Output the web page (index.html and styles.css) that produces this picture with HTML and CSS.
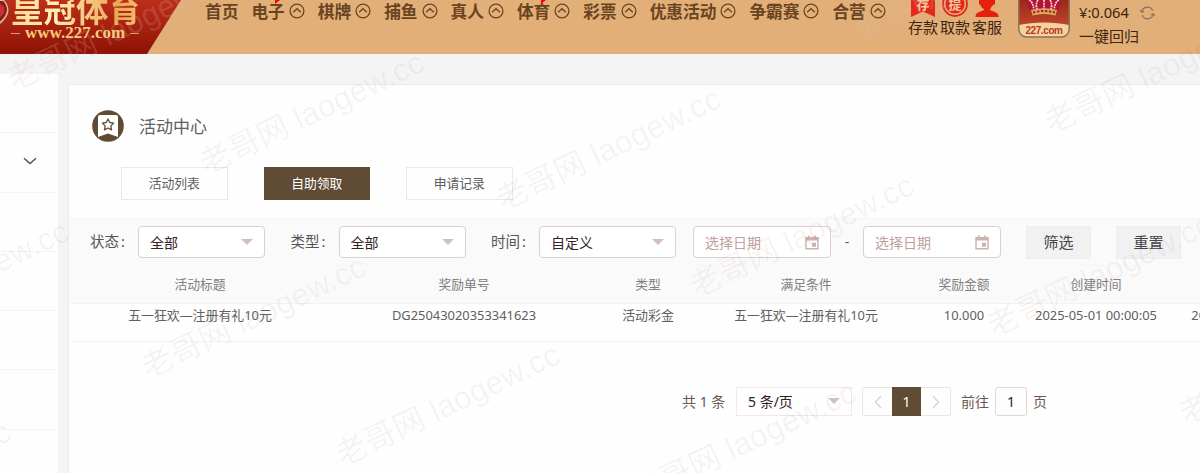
FILE: index.html
```html
<!DOCTYPE html>
<html lang="zh-CN">
<head>
    <meta charset="UTF-8">
    <meta name="viewport" content="width=device-width, initial-scale=1.0">
    <title>活动中心</title>
    <link rel="stylesheet" href="styles.css">
</head>
<body>
    <!-- shared icons -->
    <svg class="sprite" width="0" height="0">
        <symbol id="up" viewBox="0 0 16 16">
            <circle cx="8" cy="8" r="6.9" fill="none" stroke="currentColor" stroke-width="1.3"/>
            <path d="M4.2 9.2 8 5.7l3.8 3.5" fill="none" stroke="currentColor" stroke-width="1.3"/>
        </symbol>
        <symbol id="calendar" viewBox="0 0 14 15">
            <path d="M1 2.6h12v11.1H1z" fill="none" stroke="currentColor" stroke-width="1.4"/>
            <path d="M1 2h12v3.4H1zM3 .5h1.7v3H3zM9.3.5H11v3H9.3zM7 7.800h4v4H7z" fill="currentColor"/>
        </symbol>
    </svg>

    <header class="header">
        <div class="logo">
            <svg class="logo-gem" width="9" height="26" viewBox="0 0 9 26">
                <path d="M0 0h4c2 2 4 5 4.500 9.500C8.500 15 5 20 0 24z" fill="#d9b8a0"/>
                <path d="M0 1h3c2 2 3.700 4.500 4 8.500C6.800 14 4 18.500 0 21.500z" fill="#8d1a17"/>
                <path d="M0 4c3 1 4.500 3 4.500 6S3 15 0 17z" fill="#c93235"/>
            </svg>
            <div class="logo-name">皇冠体育</div>
            <div class="logo-url"><i></i>www.227.com<i></i></div>
        </div>
        <nav class="nav">
            <a class="nav-item">首页</a>
            <a class="nav-item hot">电子<svg><use href="#up"/></svg></a>
            <a class="nav-item">棋牌<svg><use href="#up"/></svg></a>
            <a class="nav-item">捕鱼<svg><use href="#up"/></svg></a>
            <a class="nav-item">真人<svg><use href="#up"/></svg></a>
            <a class="nav-item hot">体育<svg><use href="#up"/></svg></a>
            <a class="nav-item">彩票<svg><use href="#up"/></svg></a>
            <a class="nav-item">优惠活动<svg><use href="#up"/></svg></a>
            <a class="nav-item">争霸赛<svg><use href="#up"/></svg></a>
            <a class="nav-item">合营<svg><use href="#up"/></svg></a>
        </nav>
        <div class="quick">
            <a class="quick-item">
                <svg width="26" height="18" viewBox="0 0 26 18">
                    <path d="M1 0h24v17l-12-5.500L1 17z" fill="#e5281c"/>
                    <text x="13" y="9" class="quick-char">存</text>
                </svg>
                <span>存款</span>
            </a>
            <a class="quick-item">
                <svg width="26" height="18" viewBox="0 0 26 18">
                    <circle cx="13" cy="4" r="12" fill="none" stroke="#e5281c" stroke-width="1.800"/>
                    <circle cx="13" cy="4" r="9.500" fill="#e5281c"/>
                    <text x="13" y="9" class="quick-char">提</text>
                </svg>
                <span>取款</span>
            </a>
            <a class="quick-item">
                <svg width="26" height="18" viewBox="0 0 26 18">
                    <path d="M5 0h16v4l-3 2c-1 2-2 3-2 4l6 2.500c2 1 2.500 2.500 2.500 4.500H1.500c0-2 .5-3.500 2.500-4.500L10 10c0-1-1-2-2-4L5 4z" fill="#e5200f"/>
                    <path d="M7 5c1 2.500 3 4 6 4" fill="none" stroke="#e5200f" stroke-width="1.200"/>
                </svg>
                <span>客服</span>
            </a>
        </div>
        <div class="app-logo">
            <svg width="52" height="38" viewBox="0 0 52 38">
                <defs>
                    <linearGradient id="appRed" x1="0" y1="0" x2="0" y2="1">
                        <stop offset="0" stop-color="#8f2115"/>
                        <stop offset="1" stop-color="#d0502f"/>
                    </linearGradient>
                </defs>
                <path d="M.8-8h50.400v37a8 8 0 0 1-8 8H8.800a8 8 0 0 1-8-8z" fill="url(#appRed)"/>
                <path d="M1 25c14-3.500 36-3.500 50 0v4a8 8 0 0 1-8 8H9a8 8 0 0 1-8-8z" fill="#f4d3a2"/>
                <path d="M.8-8h50.400v37a8 8 0 0 1-8 8H8.800a8 8 0 0 1-8-8z" fill="none" stroke="#8b7355" stroke-width="1.500"/>
                <path d="M9 0h34c0 4-2 7-3 10H12C11 7 9 4 9 0z" fill="#b5123a"/>
                <path d="M11 0c3 1 4 5 5 9M20 0c-2 3-2 6-1 9M26 0v9M32 0c2 3 2 6 1 9M41 0c-3 1-4 5-5 9" fill="none" stroke="#f3d7c6" stroke-width="1.700" stroke-dasharray="2 .7"/>
                <path d="M13 10q13-3.500 26 0l-1.500 5.500q-11.500-3-23 0z" fill="#dca95c"/>
                <path d="M15 12.500q11-3 22 0" fill="none" stroke="#a3203a" stroke-width="2" stroke-dasharray="2.500 1.500"/>
            </svg>
            <span class="app-url">227.com</span>
        </div>
        <div class="wallet">
            <div class="balance">¥:0.064
                <svg width="15" height="14" viewBox="0 0 15 14" fill="none" stroke="#85715c" stroke-width="1.100">
                    <path d="M1.800 5.800A5.700 5.700 0 0 1 12.700 4.700M13.200 8.200A5.700 5.700 0 0 1 2.300 9.300"/>
                    <path d="M.3 4.200 1.800 6.200 4 5M14.700 9.800 13.200 7.800 11 9"/>
                </svg>
            </div>
            <div>一键回归</div>
        </div>
    </header>

    <div class="page">
        <aside class="sidebar">
            <div class="side-item"></div>
            <div class="side-item">
                <svg width="14" height="8" viewBox="0 0 14 8"><path d="M1 1.200 7 6.500l6-5.300" fill="none" stroke="#5f4b42" stroke-width="1.400"/></svg>
            </div>
            <div class="side-item"></div>
            <div class="side-item"></div>
            <div class="side-item"></div>
            <div class="side-item"></div>
            <div class="side-item"></div>
        </aside>

        <main class="panel">
            <div class="panel-title">
                <svg width="32" height="32" viewBox="0 0 32 32">
                    <circle cx="16" cy="16" r="15.800" fill="#604b35"/>
                    <path d="M8 5h16q2 0 2 2v20l-10-3.500L6 27V7q0-2 2-2z" fill="#fff"/>
                    <path d="m16 9 1.800 3.500 3.900.6-2.800 2.800.6 3.900-3.500-1.800-3.500 1.800.6-3.900-2.800-2.800 3.900-.6z" fill="none" stroke="#604b35" stroke-width="1.300" stroke-linejoin="round"/>
                </svg>
                <span>活动中心</span>
            </div>
            <div class="tabs">
                <a class="tab">活动列表</a>
                <a class="tab active">自助领取</a>
                <a class="tab">申请记录</a>
            </div>

            <div class="filters">
                <span class="label">状态<i>:</i></span>
                <div class="select">全部<i class="caret"></i></div>
                <span class="label">类型<i>:</i></span>
                <div class="select">全部<i class="caret"></i></div>
                <span class="label">时间<i>:</i></span>
                <div class="select wide">自定义<i class="caret"></i></div>
                <div class="date">选择日期<svg><use href="#calendar"/></svg></div>
                <span class="dash">-</span>
                <div class="date">选择日期<svg><use href="#calendar"/></svg></div>
                <a class="btn">筛选</a>
                <a class="btn">重置</a>
            </div>

            <div class="table">
                <div class="row head">
                    <div>活动标题</div>
                    <div>奖励单号</div>
                    <div>类型</div>
                    <div>满足条件</div>
                    <div>奖励金额</div>
                    <div>创建时间</div>
                    <div></div>
                </div>
                <div class="row">
                    <div>五一狂欢—注册有礼10元</div>
                    <div>DG25043020353341623</div>
                    <div>活动彩金</div>
                    <div>五一狂欢—注册有礼10元</div>
                    <div>10.000</div>
                    <div>2025-05-01 00:00:05</div>
                    <div>2025-05-01</div>
                </div>
            </div>

            <div class="pagination">
                <span class="total">共 1 条</span>
                <div class="page-size">5 条/页<i class="caret"></i></div>
                <div class="pager">
                    <a><svg width="8" height="14" viewBox="0 0 8 14"><path d="M7 1 1.500 7 7 13"/></svg></a>
                    <a class="active">1</a>
                    <a><svg width="8" height="14" viewBox="0 0 8 14"><path d="M1 1l5.500 6L1 13"/></svg></a>
                </div>
                <span class="jump">前往</span>
                <div class="page-input">1</div>
                <span>页</span>
            </div>
        </main>
    </div>

    <!-- watermark -->
    <svg class="watermark" width="1200" height="473" viewBox="0 0 1200 473">
        <g class="on-dark">
            <text transform="translate(14 91) rotate(-25.500)" textLength="244">老哥网 laogew.cc</text>
            <text transform="translate(861 45) rotate(-25.500)" textLength="244">老哥网 laogew.cc</text>
        </g>
        <text transform="translate(206 175) rotate(-25.500)" textLength="244">老哥网 laogew.cc</text>
        <text transform="translate(503 211) rotate(-25.500)" textLength="244">老哥网 laogew.cc</text>
        <text transform="translate(1051 134) rotate(-25.500)" textLength="244">老哥网 laogew.cc</text>
        <text transform="translate(696 298) rotate(-25.500)" textLength="244">老哥网 laogew.cc</text>
        <text transform="translate(994 337) rotate(-25.500)" textLength="244">老哥网 laogew.cc</text>
        <text transform="translate(148 379) rotate(-25.500)" textLength="244">老哥网 laogew.cc</text>
        <text transform="translate(342 467) rotate(-25.500)" textLength="244">老哥网 laogew.cc</text>
        <text transform="translate(638 505) rotate(-25.500)" textLength="244">老哥网 laogew.cc</text>
        <text transform="translate(1186 425) rotate(-25.500)" textLength="244">老哥网 laogew.cc</text>
        <text transform="translate(-149 344) rotate(-25.500)" textLength="244">老哥网 laogew.cc</text>
        <text transform="translate(-207 544) rotate(-25.500)" textLength="244">老哥网 laogew.cc</text>
    </svg>
</body>
</html>
```
FILE: styles.css
```css
* {
    margin: 0;
    padding: 0;
    box-sizing: border-box;
}

body {
    font-family: 'Noto Sans', 'Noto Sans CJK SC', sans-serif;
    font-size: 13px;
    background: #f4f4f4;
    color: #606060;
    height: 473px;
    overflow: hidden;
    position: relative;
}

.sprite {
    position: absolute;
}

/* header */
.header {
    height: 54px;
    background: #e3af78;
    display: flex;
    color: #3d2510;
    overflow: hidden;
}

.logo {
    width: 181px;
    height: 54px;
    background: linear-gradient(#bd2f1a, #8e1205);
    clip-path: polygon(0 0, 100% 0, 147px 100%, 0 100%);
    position: relative;
    flex: none;
}

.logo-gem {
    position: absolute;
    left: 0;
    top: 0;
}

.logo-name {
    font: bold 32.5px/32px 'Noto Sans CJK SC', sans-serif;
    height: 34px;
    margin-top: -8px;
    padding-left: 11px;
    white-space: nowrap;
    background: linear-gradient(90deg, #f8d68c, #ffefb5 30%, #e9a953 65%, #ffe49c);
    background-clip: text;
    -webkit-background-clip: text;
    color: transparent;
}

.logo-url {
    display: flex;
    align-items: center;
    gap: 5px;
    padding-left: 11px;
    margin-top: -2px;
    font: bold 17px/18px 'Liberation Serif', serif;
    color: #f7cd78;
}

.logo-url i {
    width: 9px;
    height: 1px;
    background: #dfa25e;
}

.nav {
    display: flex;
    gap: 13px;
    padding-left: 24px;
    width: 727px;
    flex: none;
    font-size: 16.7px;
    font-weight: bold;
    line-height: 24px;
    color: #694421;
}

.nav-item {
    display: flex;
    gap: 4px;
    height: 24px;
    position: relative;
    white-space: nowrap;
}

.nav-item svg {
    width: 16px;
    height: 16px;
    margin-top: 3px;
}

.hot::before {
    content: '';
    position: absolute;
    left: 24px;
    top: 0;
    border-top: 4px solid #f00;
    border-right: 5px solid transparent;
}

.quick {
    display: flex;
    gap: 2px;
    width: 110px;
    flex: none;
    font-size: 15px;
    line-height: 18px;
}

.quick-item {
    width: 30px;
    display: flex;
    flex-direction: column;
    align-items: center;
    white-space: nowrap;
}

.quick-char {
    font: bold 13px 'Noto Sans CJK SC', sans-serif;
    fill: #f3c79c;
    text-anchor: middle;
}

.app-logo {
    width: 52px;
    height: 38px;
    position: relative;
    flex: none;
}

.app-url {
    position: absolute;
    left: 0;
    width: 52px;
    bottom: 2px;
    text-align: center;
    font: bold 10px/11px 'Liberation Sans', sans-serif;
    letter-spacing: -0.4px;
    color: #c2341e;
}

.wallet {
    padding-left: 9px;
    font-size: 15px;
    line-height: 24px;
    white-space: nowrap;
}

.balance {
    display: flex;
    align-items: center;
    gap: 11px;
    font-size: 14.7px;
}

.balance svg {
    margin-top: 2px;
}

/* layout */
.page {
    display: flex;
    height: 419px;
}

.sidebar {
    width: 58px;
    margin: 20px 11px 0 0;
    background: #fefefe;
    flex: none;
}

.side-item {
    height: 59.3px;
    border-bottom: 1px solid #f4f4f4;
    display: flex;
    align-items: center;
    justify-content: center;
    padding-left: 2px;
}

.side-item svg {
    margin-top: -2px;
}

.panel {
    flex: 1;
    min-width: 0;
    margin-top: 30px;
    background: #fefefe;
    border-top: 1px solid #ebebeb;
    box-shadow: -1px 0 #ebebeb;
    overflow: hidden;
}

.panel-title {
    display: flex;
    align-items: center;
    gap: 15px;
    padding: 25px 0 0 23px;
    font-size: 17px;
    line-height: 32px;
}

.panel-title span {
    padding-top: 1px;
    height: 32px;
}

.tabs {
    display: flex;
    gap: 36px;
    padding: 25px 0 18px 52px;
}

.tab {
    width: 106.5px;
    height: 33px;
    border: 1px solid #e9e9e9;
    line-height: 31px;
    text-align: center;
    font-size: 12.8px;
}

.tab.active {
    background: #604b35;
    border-color: #604b35;
    color: #fff;
}

/* filters */
.filters {
    display: flex;
    align-items: center;
    height: 48px;
    padding-left: 21px;
    background: #fafafa;
    border-top: 1px solid #f5f5f5;
    border-bottom: 1px solid #f6f6f6;
}

.label {
    width: 48px;
    font-size: 14.5px;
    line-height: 22px;
    padding-bottom: 2px;
    color: #555;
    white-space: nowrap;
    flex: none;
}

.label i {
    font-style: normal;
    margin-left: 2px;
}

.select,
.date {
    display: flex;
    align-items: center;
    justify-content: space-between;
    height: 32px;
    padding: 0 11px;
    border: 1px solid #dccfcd;
    border-radius: 4px;
    background: #fff;
    font-size: 14px;
    line-height: 29px;
    color: #35231f;
    flex: none;
}

.select {
    width: 127px;
    margin-right: 25.5px;
}

.select.wide {
    width: 137px;
    margin-right: 17px;
}

.caret {
    border: 6.5px solid transparent;
    border-top-color: #d3bfbd;
    border-bottom: 0;
}

.date {
    width: 138px;
    color: #c0a19d;
}

.date svg {
    width: 14px;
    height: 15px;
    color: #cdb2af;
}

.dash {
    width: 32px;
    padding-bottom: 2px;
    text-align: center;
    font-size: 14px;
}

.btn {
    width: 65px;
    height: 33px;
    margin-left: 25px;
    line-height: 30px;
    background: #f1f1f1;
    border: 1px solid #eee;
    text-align: center;
    font-size: 15px;
    color: #444;
    flex: none;
}

/* table */
.row {
    display: grid;
    grid-template-columns: 262px 266px 102px 214px 102px 162px 96px;
    height: 38px;
    line-height: 23px;
    text-align: center;
    font-size: 12.9px;
    border-bottom: 1px solid #f3f3f3;
    white-space: nowrap;
}

.row.head {
    background: #fafafa;
    line-height: 37px;
    color: #808080;
    font-size: 12.8px;
}

/* pagination */
.pagination {
    display: flex;
    align-items: center;
    padding: 45px 0 0 613px;
    font-size: 14px;
    line-height: 27px;
    color: #6b5652;
    white-space: nowrap;
}

.total,
.jump,
.jump ~ span {
    padding-bottom: 1px;
}

.total {
    width: 54px;
}

.page-size {
    display: flex;
    align-items: center;
    justify-content: space-between;
    width: 116px;
    height: 29px;
    padding: 0 11px 1px;
    margin-right: 10px;
    border: 1px solid #f0e9e8;
    color: #302018;
}

.pager {
    display: flex;
    width: 89px;
    height: 29px;
    border: 1px solid #ece5e4;
    border-radius: 2px;
    margin-right: 10px;
}

.pager a {
    flex: 1;
    display: flex;
    align-items: center;
    justify-content: center;
}

.pager path {
    fill: none;
    stroke: #d8d2d0;
    stroke-width: 1.3;
}

.pager .active {
    margin: -1px 0;
    background: #604b35;
    color: #fff;
}

.jump {
    width: 34px;
}

.page-input {
    width: 32px;
    height: 29px;
    margin-right: 6px;
    border: 1px solid #e0d6d4;
    border-radius: 3px;
    text-align: center;
    color: #302018;
}

.watermark {
    position: absolute;
    left: 0;
    top: 0;
    pointer-events: none;
    font: 31.5px 'Liberation Sans', 'Noto Sans CJK SC', sans-serif;
    fill: rgba(130, 60, 60, 0.06);
    stroke: rgba(130, 60, 60, 0.02);
    stroke-width: 1;
}

.on-dark {
    fill: rgba(225, 190, 190, 0.19);
}
```
